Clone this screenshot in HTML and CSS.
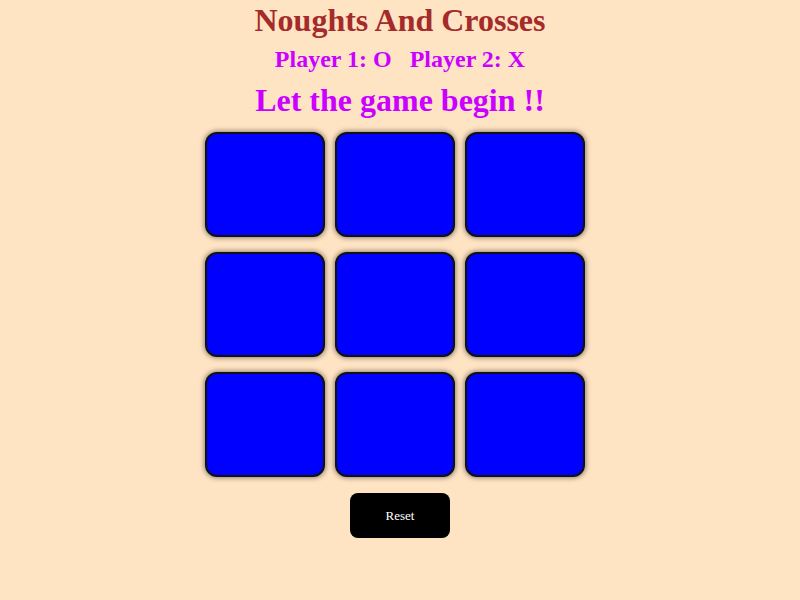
FILE: index.html
```html
<!DOCTYPE html>
<html>
<head>
<meta charset="utf-8">
<link rel="stylesheet" href="styles.css">
</head>
<body>
<h1 class="title">Noughts And Crosses</h1>
<h2 class="players">Player 1: O&nbsp;&nbsp;&nbsp;Player 2: X</h2>
<h1 class="status">Let the game begin !!</h1>
<div class="board-wrap">
  <div class="board">
    <div class="cell"></div><div class="cell"></div><div class="cell"></div>
    <div class="cell"></div><div class="cell"></div><div class="cell"></div>
    <div class="cell"></div><div class="cell"></div><div class="cell"></div>
  </div>
</div>
<div class="actions"><button class="reset">Reset</button></div>
</body>
</html>
```
FILE: styles.css
```css
html, body { background: #ffe4c4; }
body {
  margin: 2px 8px 8px;
  font-family: "Liberation Serif", "Times New Roman", serif;
  text-align: center;
}
.title {
  margin: 0;
  font-size: 32px;
  line-height: 37px;
  color: #a52a2a;
}
.players {
  margin: 0;
  margin-top: 6px;
  font-size: 24px;
  line-height: 28px;
  color: #cc00ff;
}
.status {
  margin: 0;
  margin-top: 9px;
  font-size: 32px;
  line-height: 37px;
  color: #cc00ff;
}
.board-wrap {
  display: flex;
  justify-content: center;
  padding-right: 10px;
  margin-top: 13px;
}
.board {
  display: grid;
  grid-template-columns: repeat(3, 120px);
  grid-auto-rows: 105px;
  column-gap: 10px;
  row-gap: 15px;
}
.cell {
  box-sizing: border-box;
  background: #0000ff;
  border: 2px solid #111;
  border-radius: 12px;
  box-shadow: 0 0 5px 1px rgba(0,0,0,0.45);
}
.actions {
  display: flex;
  justify-content: center;
  margin-top: 16px;
}
.reset {
  width: 100px;
  height: 45px;
  background: #000;
  color: #fff;
  border: none;
  border-radius: 8px;
  font-family: "Liberation Serif", "Times New Roman", serif;
  font-size: 13px;
}
```
